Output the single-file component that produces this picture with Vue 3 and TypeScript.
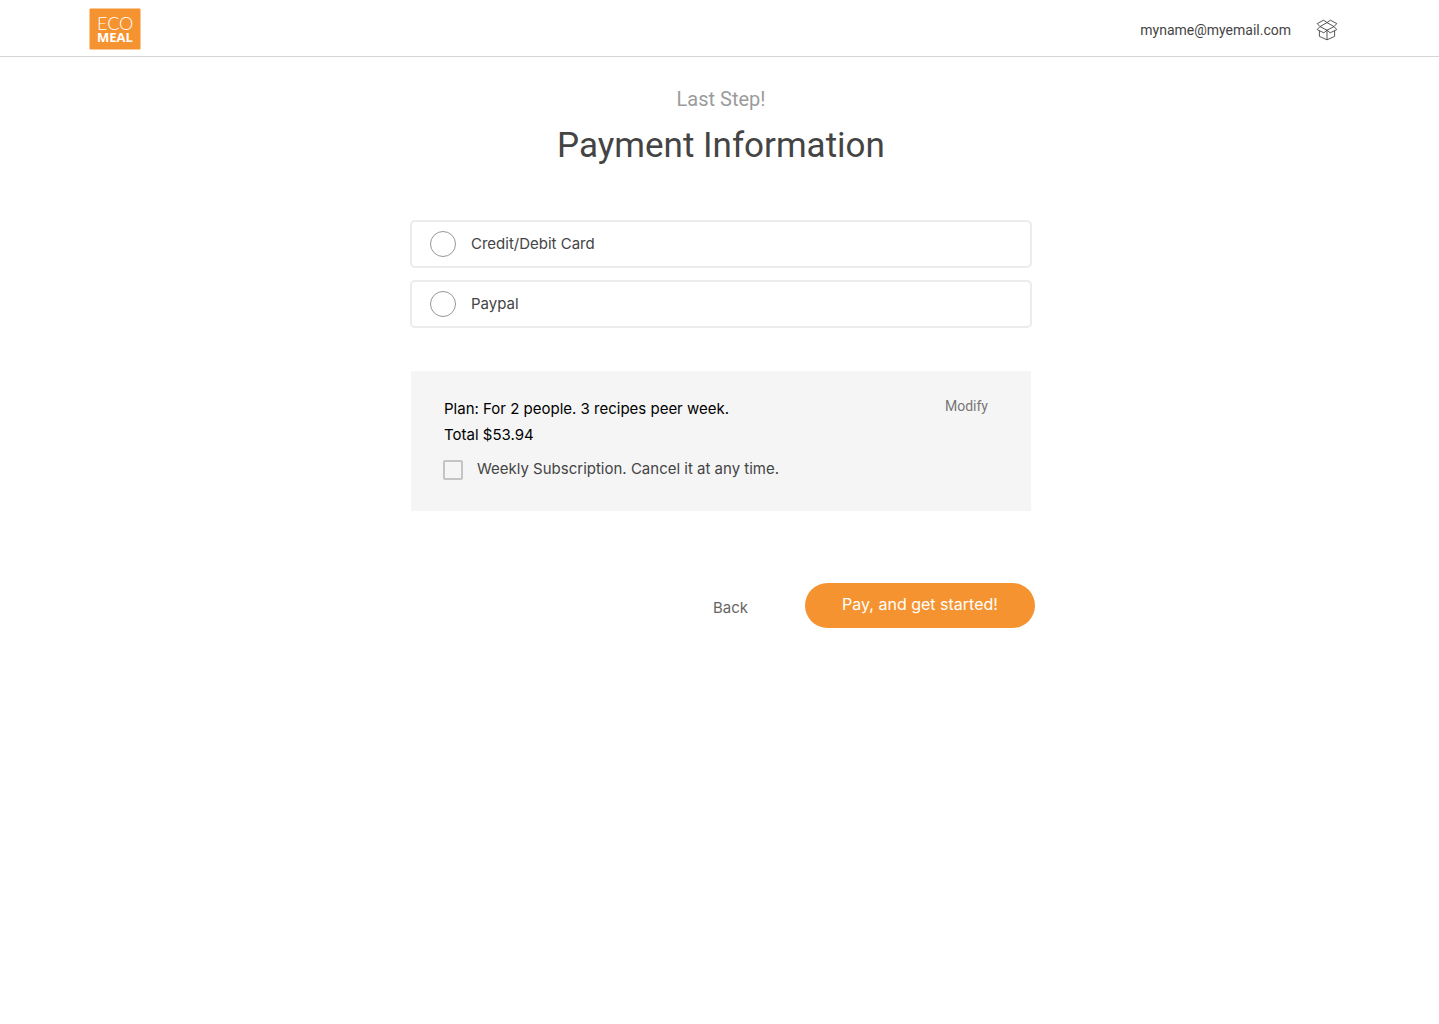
<script setup lang="ts">
import { ref } from 'vue'

interface PaymentMethod {
  id: string
  label: string
}

const methods: PaymentMethod[] = [
  { id: 'card', label: 'Credit/Debit Card' },
  { id: 'paypal', label: 'Paypal' },
]
const selected = ref<string>('')
const weekly = ref<boolean>(false)
</script>

<template>
  <div class="page">
    <header class="topbar">
      <a class="logo" href="#" aria-label="Eco Meal">
        <svg width="52" height="42" viewBox="0 0 52 42">
          <rect x="0.5" y="0.5" width="51" height="41" rx="1" fill="#f59331" />
          <text x="8" y="22" class="logo-eco">ECO</text>
          <text x="8" y="34" class="logo-meal">MEAL</text>
        </svg>
      </a>
      <nav class="account">
        <a class="email" href="#">myname@myemail.com</a>
        <a class="box" href="#" aria-label="My box">
          <svg width="22" height="22" viewBox="0 0 22 22" fill="none" stroke="#444" stroke-width="0.9" stroke-linejoin="round">
            <path d="M11 3.6 7.6 1.2 1.2 4.6 4 7.6 1.2 10.6 7.8 13.8 11 11.2 14.2 13.8 20.8 10.6 18 7.6 20.8 4.6 14.4 1.2Z" />
            <path d="M11 3.6 4 7.6 11 11.2 18 7.6Z" />
            <path d="M3.4 11.8V17.4L11 20.8 18.6 17.4V11.8M11 11.2V20.8" />
          </svg>
        </a>
      </nav>
    </header>

    <main class="content">
      <p class="step">Last Step!</p>
      <h1 class="title">Payment Information</h1>

      <form @submit.prevent>
        <div class="methods" role="radiogroup" aria-label="Payment method">
          <label v-for="m in methods" :key="m.id" class="method" :for="m.id">
            <input :id="m.id" v-model="selected" class="radio" type="radio" name="method" :value="m.id" />
            <span>{{ m.label }}</span>
          </label>
        </div>

        <section class="plan">
          <div class="summary">
            <p class="line">Plan: For 2 people. 3 recipes peer week.</p>
            <p class="line">Total $53.94</p>
            <label class="weekly" for="weekly">
              <input id="weekly" v-model="weekly" class="check" type="checkbox" />
              <span>Weekly Subscription. Cancel it at any time.</span>
            </label>
          </div>
          <a class="modify" href="#">Modify</a>
        </section>

        <div class="actions">
          <a class="back" href="#">Back</a>
          <button class="pay" type="submit">Pay, and get started!</button>
        </div>
      </form>
    </main>
  </div>
</template>

<style>
body {
  background: #fff;
}
</style>

<style scoped>
.page {
  font-family: Inter, Roboto, sans-serif;
  font-size: 15px;
  line-height: 26px;
  color: #444;
}

a {
  color: inherit;
  text-decoration: none;
}

p,
h1 {
  margin: 0;
  font-weight: 400;
}

.topbar {
  display: flex;
  align-items: center;
  justify-content: space-between;
  box-sizing: border-box;
  height: 57px;
  padding: 2px 101px 0 89px;
  border-bottom: 1px solid #d4d4d4;
}

.logo svg,
.box svg {
  display: block;
}

.logo-eco,
.logo-meal {
  fill: #fff;
}

.logo-eco {
  font-family: Lato, sans-serif;
  font-size: 18px;
  font-weight: 300;
}

.logo-meal {
  font-family: "Open Sans", sans-serif;
  font-size: 13px;
  font-weight: 700;
}

.account {
  display: flex;
  align-items: center;
  gap: 25px;
  padding-top: 2px;
}

.email,
.modify {
  font-family: Roboto, sans-serif;
  font-size: 14px;
}

.content {
  max-width: 622px;
  margin: 0 auto;
  padding: 29px 13px 0 16px;
}

.step {
  color: #9b9b9b;
  font-family: Roboto, sans-serif;
  font-size: 20px;
  text-align: center;
}

.title {
  margin-top: 8px;
  font-family: Roboto, sans-serif;
  font-size: 35px;
  line-height: 52px;
  text-align: center;
}

.methods {
  display: flex;
  flex-direction: column;
  gap: 12px;
  margin-top: 48px;
}

.method {
  display: flex;
  align-items: center;
  gap: 15px;
  box-sizing: border-box;
  height: 48px;
  padding: 0 18px;
  border: 2px solid #ececec;
  border-radius: 5px;
}

.radio,
.check {
  appearance: none;
  flex: none;
  box-sizing: border-box;
  margin: 0;
  border: 1px solid #979797;
}

.radio {
  width: 26px;
  height: 26px;
  border-radius: 50%;
}

.radio:checked {
  background: radial-gradient(#f59331 50%, #fff 54%);
}

.plan {
  display: flex;
  align-items: flex-start;
  justify-content: space-between;
  box-sizing: border-box;
  min-height: 140px;
  margin: 43px 1px 0;
  padding: 25px 43px 24px 33px;
  background: #f5f5f5;
}

.line {
  color: #000;
}

.weekly {
  display: flex;
  align-items: center;
  gap: 14px;
  margin: 8px 0 0 -1px;
}

.check {
  width: 20px;
  height: 20px;
  margin-top: 2px;
  border: 2px solid #c4c4c4;
  border-radius: 2px;
}

.check:checked {
  background: #f59331;
}

.modify {
  line-height: 20px;
  color: #777;
}

.actions {
  display: flex;
  align-items: center;
  justify-content: flex-end;
  gap: 57px;
  margin: 72px -3px 0 0;
}

.back {
  padding-top: 4px;
  color: #666;
}

.pay {
  width: 230px;
  height: 45px;
  padding: 0 0 3px;
  border: 0;
  border-radius: 23px;
  background: #f59331;
  color: #fff;
  font-family: inherit;
  font-size: 16px;
  cursor: pointer;
}
</style>
